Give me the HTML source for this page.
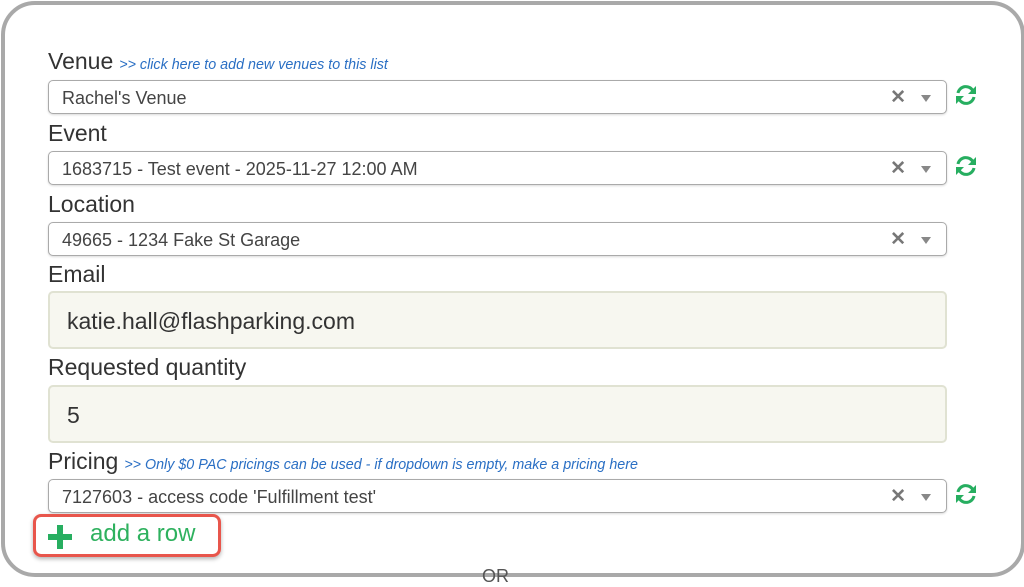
<!DOCTYPE html>
<html><head><style>
body{margin:0;width:1024px;height:576px;background:#fff;overflow:hidden;font-family:"Liberation Sans",sans-serif;position:relative}
.frame{position:absolute;left:1px;top:1px;width:1016px;height:568px;border:4px solid #a9a9a9;border-radius:34px;background:#fff}
.lbl{position:absolute;left:48px;font-size:23px;color:#333;white-space:nowrap}
.lbl i{font-size:14.3px;color:#2a6fc4;margin-left:6px}
.sel{position:absolute;left:48px;height:34px;border:1px solid #aaa;border-radius:5px;background:#fff;box-shadow:0 1px 2px rgba(0,0,0,.15);font-size:18px;color:#444;line-height:34px;padding-left:13px;box-sizing:border-box;width:899px}
.x{position:absolute;right:40px;top:0;font-size:19px;color:#777;font-weight:bold}
.ar{position:absolute;right:15px;top:14px;width:0;height:0;border-left:5px solid transparent;border-right:5px solid transparent;border-top:7px solid #888}
.inp{position:absolute;left:48px;width:899px;height:58px;border:2px solid #e0e2d2;border-radius:5px;background:#f7f7f0;box-sizing:border-box;font-size:23px;color:#333;line-height:56px;padding-left:17px}
.rf{position:absolute;left:954px;width:24px;height:24px}
</style></head><body>
<div class="frame"></div>
<div class="lbl" style="top:48px">Venue<i>&gt;&gt; click here to add new venues to this list</i></div>
<div class="sel" style="top:80px">Rachel's Venue<span class="x">✕</span><span class="ar"></span></div>
<div class="lbl" style="top:120px">Event</div>
<div class="sel" style="top:151px">1683715 - Test event - 2025-11-27 12:00 AM<span class="x">✕</span><span class="ar"></span></div>
<div class="lbl" style="top:191px">Location</div>
<div class="sel" style="top:222px">49665 - 1234 Fake St Garage<span class="x">✕</span><span class="ar"></span></div>
<div class="lbl" style="top:261px">Email</div>
<div class="inp" style="top:291px">katie.hall@flashparking.com</div>
<div class="lbl" style="top:354px">Requested quantity</div>
<div class="inp" style="top:385px">5</div>
<div class="lbl" style="top:448px">Pricing<i>&gt;&gt; Only $0 PAC pricings can be used - if dropdown is empty, make a pricing here</i></div>
<div class="sel" style="top:479px">7127603 - access code 'Fulfillment test'<span class="x">✕</span><span class="ar"></span></div>
<svg class="rf" style="top:83px" viewBox="0 0 24 24"><g fill="none" stroke="#27ae60" stroke-width="3"><path d="M4 10A8 8 0 0 1 19 8"/><path d="M20 14A8 8 0 0 1 5 16"/></g><path d="M22 3v8h-8z" fill="#27ae60"/><path d="M2 21v-8h8z" fill="#27ae60"/></svg>
<svg class="rf" style="top:154px" viewBox="0 0 24 24"><g fill="none" stroke="#27ae60" stroke-width="3"><path d="M4 10A8 8 0 0 1 19 8"/><path d="M20 14A8 8 0 0 1 5 16"/></g><path d="M22 3v8h-8z" fill="#27ae60"/><path d="M2 21v-8h8z" fill="#27ae60"/></svg>
<svg class="rf" style="top:482px" viewBox="0 0 24 24"><g fill="none" stroke="#27ae60" stroke-width="3"><path d="M4 10A8 8 0 0 1 19 8"/><path d="M20 14A8 8 0 0 1 5 16"/></g><path d="M22 3v8h-8z" fill="#27ae60"/><path d="M2 21v-8h8z" fill="#27ae60"/></svg>
<div style="position:absolute;left:33px;top:514px;width:188px;height:43px;border:3px solid #e8564c;border-radius:8px;box-sizing:border-box;box-shadow:0 2px 4px rgba(0,0,0,.3)"></div>
<div style="position:absolute;left:48px;top:525px;width:24px;height:24px">
<div style="position:absolute;left:9px;top:0;width:6px;height:24px;background:#27ae60"></div>
<div style="position:absolute;left:0;top:9px;width:24px;height:6px;background:#27ae60"></div></div>
<div style="position:absolute;left:90px;top:520px;font-size:24px;color:#2eb15e">add a row</div>
<div style="position:absolute;left:482px;top:566px;font-size:18px;color:#555">OR</div>
</body></html>
